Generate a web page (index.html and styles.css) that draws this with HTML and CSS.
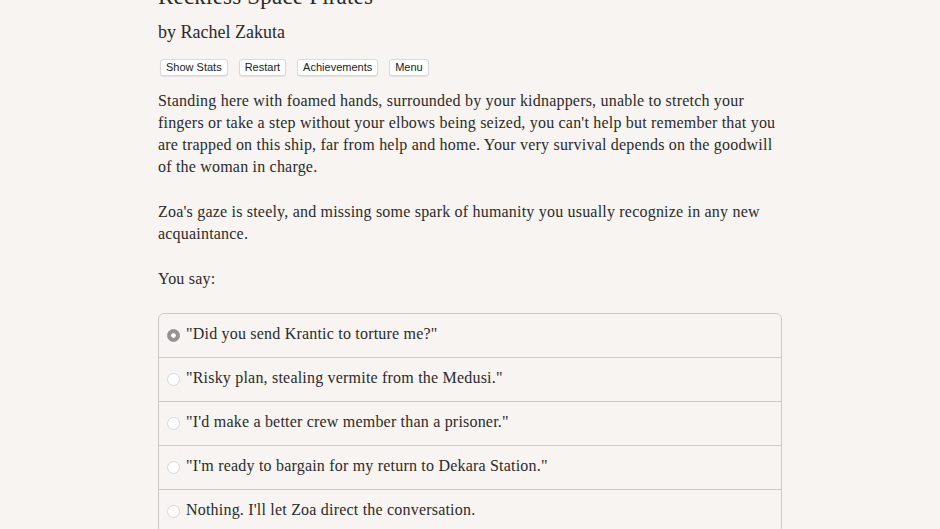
FILE: index.html
```html
<!DOCTYPE html>
<html>
<head>
<meta charset="utf-8">
<link rel="stylesheet" href="styles.css">
</head>
<body>
<div class="page">
  <h1 class="title">Reckless Space Pirates</h1>
  <h2 class="author">by Rachel Zakuta</h2>
  <div class="buttons">
    <button class="btn">Show Stats</button>
    <button class="btn">Restart</button>
    <button class="btn">Achievements</button>
    <button class="btn">Menu</button>
  </div>
  <p class="para">Standing here with foamed hands, surrounded by your kidnappers, unable to stretch your fingers or take a step without your elbows being seized, you can't help but remember that you are trapped on this ship, far from help and home. Your very survival depends on the goodwill of the woman in charge.</p>
  <p class="para">Zoa's gaze is steely, and missing some spark of humanity you usually recognize in any new acquaintance.</p>
  <p class="para">You say:</p>
  <div class="choices">
    <div class="choice"><span class="radio checked"></span><span>"Did you send Krantic to torture me?"</span></div>
    <div class="choice"><span class="radio"></span><span>"Risky plan, stealing vermite from the Medusi."</span></div>
    <div class="choice"><span class="radio"></span><span>"I'd make a better crew member than a prisoner."</span></div>
    <div class="choice"><span class="radio"></span><span>"I'm ready to bargain for my return to Dekara Station."</span></div>
    <div class="choice"><span class="radio"></span><span>Nothing. I'll let Zoa direct the conversation.</span></div>
  </div>
</div>
</body>
</html>
```
FILE: styles.css
```css
html, body {
  margin: 0;
  padding: 0;
  background: #f7f4f1;
  overflow: hidden;
}
.page {
  width: 624px;
  margin: 0 auto;
  margin-top: -19px;
  font-family: "Liberation Serif", "DejaVu Serif", serif;
  color: #2b2b2b;
}
.title {
  font-size: 23px;
  font-weight: normal;
  letter-spacing: 0.2px;
  line-height: 32px;
  margin: 0;
}
.author {
  font-size: 18px;
  font-weight: normal;
  line-height: 26px;
  margin: 6px 0 0 0;
}
.buttons {
  display: flex;
  gap: 11px;
  margin: 14px 0 0 2px;
}
.btn {
  font-family: "Liberation Sans", Arial, sans-serif;
  font-size: 11px;
  color: #1a1a1a;
  background: #fff;
  border: 1px solid #dcd9d6;
  border-radius: 3px;
  height: 17px;
  padding: 0 5px;
  line-height: 15px;
  box-shadow: 0 1px 1px rgba(0,0,0,0.08);
}
.para {
  font-size: 16px;
  letter-spacing: 0.2px;
  line-height: 22px;
  margin: 14px 0 23px 0;
}
.para + .para {
  margin-top: 0;
}
.choices {
  border: 1px solid #cdc9c6;
  border-radius: 6px 6px 0 0;
  margin-top: 23px;
}
.choice {
  display: flex;
  align-items: center;
  gap: 6px;
  height: 43px;
  padding-left: 8px;
  font-size: 16px;
  letter-spacing: 0.2px;
  border-top: 1px solid #cdc9c6;
}
.choice span:last-child {
  position: relative;
  top: -2px;
}
.choice:first-child {
  border-top: none;
}
.radio {
  width: 13px;
  height: 13px;
  border-radius: 50%;
  background: #fff;
  border: 1px solid #dad7d4;
  box-sizing: border-box;
  flex: none;
}
.radio.checked {
  background: radial-gradient(circle, #fff 0 2px, #959392 2.6px);
  border-color: #959392;
}
```
